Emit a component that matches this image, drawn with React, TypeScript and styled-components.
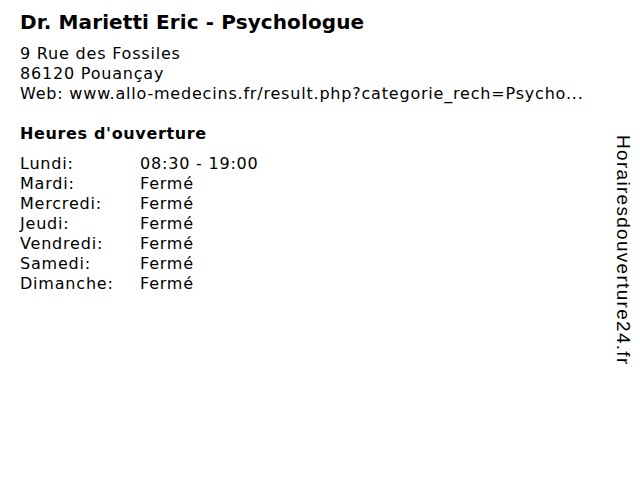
import React from 'react';
import styled, { createGlobalStyle } from 'styled-components';

const GlobalStyle = createGlobalStyle`
    html, body {
        margin: 0;
        padding: 0;
        background: #ffffff;
    }
    body {
        font-family: 'DejaVu Sans', Verdana, sans-serif;
        color: #000000;
    }
`;

const hours = [
    { day: 'Lundi:', value: '08:30 - 19:00' },
    { day: 'Mardi:', value: 'Fermé' },
    { day: 'Mercredi:', value: 'Fermé' },
    { day: 'Jeudi:', value: 'Fermé' },
    { day: 'Vendredi:', value: 'Fermé' },
    { day: 'Samedi:', value: 'Fermé' },
    { day: 'Dimanche:', value: 'Fermé' },
];

const App = () => {
    return (
        <>
            <GlobalStyle />
            <Page>
                <Main>
                    <Title>Dr. Marietti Eric - Psychologue</Title>
                    <Address>
                        <Line>9 Rue des Fossiles</Line>
                        <Line>86120 Pouançay</Line>
                        <Line>Web: www.allo-medecins.fr/result.php?categorie_rech=Psycho...</Line>
                    </Address>
                    <SectionTitle>Heures d'ouverture</SectionTitle>
                    <HoursTable>
                        {hours.map((h) => (
                            <React.Fragment key={h.day}>
                                <Day>{h.day}</Day>
                                <Value>{h.value}</Value>
                            </React.Fragment>
                        ))}
                    </HoursTable>
                </Main>
                <Side>Horairesdouverture24.fr</Side>
            </Page>
        </>
    );
};

const Page = styled.div`
    width: 640px;
    height: 480px;
    display: flex;
    justify-content: space-between;
    box-sizing: border-box;
    overflow: hidden;
`;

const Main = styled.div`
    padding: 9px 0 0 20px;
    display: flex;
    flex-direction: column;
`;

const Title = styled.h1`
    margin: 0;
    font-size: 20px;
    font-weight: bold;
    line-height: 26px;
    letter-spacing: 0.1px;
    white-space: nowrap;
`;

const Address = styled.div`
    margin-top: 9px;
    display: flex;
    flex-direction: column;
`;

const Line = styled.div`
    font-size: 16px;
    line-height: 20px;
    letter-spacing: 0.8px;
    white-space: nowrap;
`;

const SectionTitle = styled.h2`
    margin: 20px 0 0 0;
    font-size: 16px;
    font-weight: bold;
    line-height: 20px;
    letter-spacing: 0.65px;
`;

const HoursTable = styled.div`
    margin-top: 10px;
    display: grid;
    grid-template-columns: 120px auto;
    font-size: 16px;
    line-height: 20px;
    letter-spacing: 0.8px;
`;

const Day = styled.div`
    white-space: nowrap;
`;

const Value = styled.div`
    white-space: nowrap;
`;

const Side = styled.div`
    writing-mode: vertical-rl;
    font-family: 'Liberation Sans', Arial, sans-serif;
    font-size: 19px;
    line-height: 22px;
    letter-spacing: 1.3px;
    padding: 135px 6px 0 0;
    color: #000000;
`;

export default App;
